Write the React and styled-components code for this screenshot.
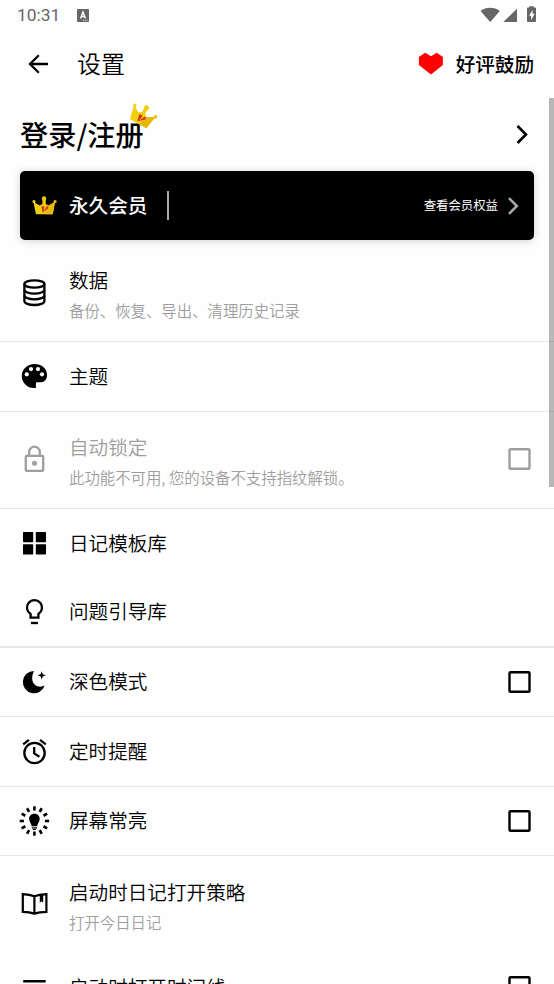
import styled, { createGlobalStyle } from "styled-components";

const GlobalStyle = createGlobalStyle`
  * {
    box-sizing: border-box;
  }
  body {
    margin: 0;
    background: #fefefe;
    color: #000;
    font-family: "Noto Sans CJK SC", sans-serif;
    font-weight: 350;
  }
`;

const Screen = styled.div`
  position: relative;
  display: flex;
  flex-direction: column;
  width: 554px;
  height: 984px;
  overflow: hidden;
`;

const StatusBar = styled.div`
  display: flex;
  align-items: center;
  flex: none;
  height: 30px;
  padding: 0 16px 0 17px;
  color: #666;
`;

const Clock = styled.span`
  width: 60px;
  font: 400 17.4px/30px Roboto, sans-serif;
`;

const StatusIcons = styled.div`
  display: flex;
  margin-left: auto;
`;

const Header = styled.header`
  display: flex;
  align-items: center;
  flex: none;
  height: 68px;
  padding: 0 20px 0 23px;
`;

const Title = styled.h1`
  margin: 0 auto 0 24px;
  padding-bottom: 3px;
  font-size: 24px;
  font-weight: 350;
  line-height: 36px;
`;

const Praise = styled.span`
  margin-left: 12px;
  padding-bottom: 1px;
  font-size: 19.6px;
  font-weight: 500;
  line-height: 30px;
`;

const Content = styled.main`
  flex: none;
`;

const Account = styled.div`
  display: flex;
  align-items: center;
  justify-content: space-between;
  height: 73px;
  padding: 0 20px 2px;
`;

const Login = styled.div`
  position: relative;
  font-size: 28.2px;
  font-weight: 500;
  line-height: 42px;
`;

const TiltedCrown = styled.div`
  position: absolute;
  top: -12px;
  left: 109px;
  display: flex;
  transform: rotate(29deg);
`;

const Member = styled.div`
  display: flex;
  align-items: center;
  height: 69px;
  margin: 0 20px 4px;
  padding: 0 13px 0 12px;
  border-radius: 5px;
  background: #000;
  box-shadow: 0 1px 8px rgba(0, 0, 0, 0.18);
  color: #fff;
`;

const MemberName = styled.span`
  margin-left: 12px;
  padding-bottom: 2px;
  font-size: 19.6px;
  font-weight: 500;
`;

const Separator = styled.span`
  width: 2px;
  height: 29px;
  margin-left: 20px;
  background: #aaa;
`;

const Benefits = styled.span`
  margin: 0 7px 0 auto;
  padding-bottom: 1px;
  font-size: 12.4px;
  font-weight: 400;
`;

const RowWrap = styled.div`
  display: flex;
  align-items: center;
  height: ${(p) => p.$height}px;
  padding: 0 22px 0 20px;
  border-bottom: ${(p) => p.$line}px solid #e6e6e6;
  color: ${(p) => (p.$disabled ? "#9e9e9e" : "#000")};
`;

const RowIcon = styled.svg`
  flex: none;
  align-self: flex-start;
  width: 30px;
  height: 30px;
  margin-top: ${(p) => (p.$tall ? 33 : 19)}px;
  overflow: visible;
`;

const RowText = styled.div`
  margin-left: 19px;
  padding: ${(p) => (p.$tall ? "2px 0 0" : "0 0 2px")};
`;

const RowTitle = styled.div`
  font-size: 19.6px;
  line-height: 30px;
`;

const RowNote = styled.div`
  margin-top: 2px;
  font-size: 15.4px;
  line-height: 26px;
  color: #9e9e9e;
`;

const Check = styled.svg`
  flex: none;
  align-self: flex-start;
  width: 24px;
  height: 24px;
  margin: ${(p) => (p.$tall ? 35 : 22)}px 0 0 auto;
`;

const Scrollbar = styled.div`
  position: absolute;
  top: 98px;
  right: 0;
  width: 5px;
  height: 389px;
  background: rgba(0, 0, 0, 0.28);
`;

function Crown({ width = 24 }) {
  return (
    <svg width={width} height={width} viewBox="0 0 24 24">
      <path d="M3.8 20.3 1.3 8.3 7.3 12 10 10.5V5h3.2v5.5l2.8 1.5 6.2-3.7-2.3 12.200H4.200z" fill="#f0d00e" />
      <path d="M16 12l6.200-3.700-2.300 12.200h-7z" fill="#e8b808" />
      <circle cx="1.9" cy="8.2" r="1.5" fill="#f0d20e" />
      <circle cx="11.6" cy="5.2" r="2.1" fill="#efca0c" />
      <circle cx="22.2" cy="8.2" r="1.5" fill="#e8c00a" />
      <path d="M9 12.700h3v3.700l2-3.700c2.500-.3 2.100 2-.1 3.400L10.200 19z" fill="#d8302c" />
      <path d="M12.600 12.600l-.8 4.300" stroke="#f0cf0c" strokeWidth=".7" />
    </svg>
  );
}

const rays = Array.from({ length: 12 }, (_, i) => i * 30);

const icons = {
  data: (
    <g fill="none" stroke="currentColor" strokeWidth="2.3">
      <ellipse cx="14.4" cy="7" rx="10" ry="3.7" />
      <path d="M4.4 7v17.2c0 2.1 4.5 3.8 10 3.8s10-1.7 10-3.8V7" />
      <path d="M4.4 12.8c0 2.1 4.5 3.8 10 3.8s10-1.7 10-3.8M4.4 18.5c0 2.1 4.5 3.8 10 3.8s10-1.7 10-3.8" />
    </g>
  ),
  theme: (
    <>
      <path
        d="M14.500 3C7.400 3 1.800 8.200 1.800 15c0 6.800 5.400 12.100 12.200 12.100h1.900v-4.600q0-1.300 1.300-1.300H21c3.600 0 6-2.700 6-7.200C27 7.500 21.500 3 14.500 3z"
        fill="currentColor"
      />
      <g fill="#fff">
        <circle cx="6.8" cy="13.3" r="2.1" />
        <circle cx="11" cy="8.1" r="2.1" />
        <circle cx="18" cy="8.1" r="2.1" />
        <circle cx="22" cy="13.3" r="2.1" />
      </g>
    </>
  ),
  lock: (
    <>
      <g fill="none" stroke="currentColor" strokeWidth="2.3">
        <rect x="5.8" y="10.8" width="17.4" height="15.1" rx="1" />
        <path d="M9.200 10.800V7a5.300 5.300 0 0 1 10.600 0v3.800" />
      </g>
      <circle cx="14.5" cy="18.2" r="2.5" fill="currentColor" />
    </>
  ),
  grid: (
    <g fill="currentColor">
      <rect x="3" y="4" width="10.2" height="10.2" rx=".6" />
      <rect x="15.8" y="4" width="10.2" height="10.2" rx=".6" />
      <rect x="3" y="16.2" width="10.2" height="10.2" rx=".6" />
      <rect x="15.8" y="16.2" width="10.2" height="10.2" rx=".6" />
    </g>
  ),
  bulb: (
    <g fill="none" stroke="currentColor" strokeWidth="2.3">
      <path d="M10.600 20.700v-3.600a7.500 7.500 0 1 1 7.800 0v3.600z" />
      <path d="M11 26h7" />
    </g>
  ),
  moon: (
    <g fill="currentColor">
      <path d="M13.900 3.900A11.200 11.200 0 1 0 24.700 18.600c-3.400 1.700-7.700 1.300-10.100-1.200-3.100-3.200-3-8.300-.7-13.500z" />
      <path d="M21.700 4.200l1.100 3 3 1.100-3 1.100-1.100 3-1.100-3-3-1.100 3-1.100z" />
    </g>
  ),
  alarm: (
    <g fill="none" stroke="currentColor" strokeWidth="2.3">
      <circle cx="14.5" cy="17" r="10.2" />
      <path d="M3.200 8.300l5.700-4.500M20 3.800l5.800 4.500M14.200 10.900v6.500l5.200 3.400" />
    </g>
  ),
  bright: (
    <>
      <g stroke="currentColor" strokeWidth="2.6">
        {rays.map((angle) => (
          <path key={angle} d="M14.400.3v4.200" transform={`rotate(${angle} 14.4 15)`} />
        ))}
      </g>
      <g fill="currentColor">
        <path d="M14.400 7.800c-3.100 0-5.300 2.200-5.300 5.100 0 3.100 2.500 4.200 2.500 7.400h5.600c0-3.200 2.500-4.300 2.500-7.400 0-2.900-2.200-5.100-5.300-5.100z" />
        <path d="M11.800 21.200h5.200v1.200h-5.200zM12.800 23h3.200v1h-3.200z" />
      </g>
    </>
  ),
  book: (
    <>
      <path
        d="M14.400 7.300C11 6 7 5.400 2.800 5.200v17.700c4.200 0 8.200.5 11.600 1.700 3.400-1.200 7.600-1.700 12-1.700V5.200C22 5.400 17.800 6 14.400 7.300zv17"
        fill="none"
        stroke="currentColor"
        strokeWidth="2.2"
      />
      <path d="M19.800 5.500h3.400v8.200l-1.700-1.500-1.700 1.500z" fill="currentColor" />
    </>
  ),
  timeline: <path d="M3.200 9.200h22.500M3.200 16h22.500M3.200 23h22.500" stroke="currentColor" strokeWidth="2.4" />,
};

const rows = [
  { icon: "data", title: "数据", note: "备份、恢复、导出、清理历史记录", height: 98, line: 1 },
  { icon: "theme", title: "主题", height: 70, line: 1 },
  {
    icon: "lock",
    title: "自动锁定",
    note: "此功能不可用, 您的设备不支持指纹解锁。",
    height: 97,
    line: 1,
    check: true,
    disabled: true,
  },
  { icon: "grid", title: "日记模板库", height: 69, line: 0 },
  { icon: "bulb", title: "问题引导库", height: 70, line: 2 },
  { icon: "moon", title: "深色模式", height: 69, line: 1, check: true },
  { icon: "alarm", title: "定时提醒", height: 70, line: 1 },
  { icon: "bright", title: "屏幕常亮", height: 69, line: 1, check: true },
  { icon: "book", title: "启动时日记打开策略", note: "打开今日日记", height: 97, line: 0 },
  { icon: "timeline", title: "启动时打开时间线", height: 69, line: 0, check: true },
];

function Row({ icon, title, note, height, line, check, disabled }) {
  return (
    <RowWrap $height={height} $line={line} $disabled={disabled}>
      <RowIcon viewBox="0 0 30 30" $tall={!!note}>
        {icons[icon]}
      </RowIcon>
      <RowText $tall={!!note}>
        <RowTitle>{title}</RowTitle>
        {note && <RowNote>{note}</RowNote>}
      </RowText>
      {check && (
        <Check viewBox="0 0 24 24" $tall={!!note}>
          <rect x="1.5" y="2.2" width="20" height="19.5" rx="1" fill="none" stroke="currentColor" strokeWidth="2.4" />
        </Check>
      )}
    </RowWrap>
  );
}

export default function App() {
  return (
    <>
      <GlobalStyle />
      <Screen>
        <StatusBar>
          <Clock>10:31</Clock>
          <svg width="12" height="13" viewBox="0 0 12 13">
            <rect width="12" height="13" rx="1" fill="#666" />
            <path d="M3.500 9.500 6 3l2.500 6.500M4.300 7.500h3.400" fill="none" stroke="#fff" strokeWidth="1.4" />
            <path d="M6 11.300h5" stroke="#fff" strokeWidth=".9" strokeDasharray="1 .8" />
          </svg>
          <StatusIcons>
            <svg width="58" height="18" viewBox="0 0 58 18" fill="#666">
              <path d="M.6 4.900C6 .6 14.500.6 19.800 4.900L10.200 16z" />
              <path d="M37 2.800V16H23.300z" />
              <path d="M49.300 1.500V.3h4.500v1.200h1.500q.7 0 .7.700v13q0 .8-.8.800h-7.400q-.8 0-.8-.8v-13q0-.7.700-.7z" />
              <path d="M52.600 4v3.800h2l-3.500 6.400v-4.500h-2z" fill="#fff" />
            </svg>
          </StatusIcons>
        </StatusBar>
        <Header>
          <svg width="30" height="30" viewBox="0 0 30 30" fill="none" stroke="#000" strokeWidth="2.3">
            <path d="M25 15H7M15.800 6.200 7 15l8.800 8.800" />
          </svg>
          <Title>设置</Title>
          <svg width="26" height="24" viewBox="0 0 26 24">
            <path d="M7.200.8 13 4.300 18.800.8 24.900 5v8L13 22.500.9 13V5z" fill="#f00" />
          </svg>
          <Praise>好评鼓励</Praise>
        </Header>
        <Content>
          <Account>
            <Login>
              登录/注册
              <TiltedCrown>
                <Crown width={28} />
              </TiltedCrown>
            </Login>
            <svg width="24" height="24" viewBox="0 0 24 24" fill="none" stroke="#000" strokeWidth="2.6">
              <path d="M7.500 4 16 12.500l-8.500 8.500" />
            </svg>
          </Account>
          <Member>
            <Crown width={25} />
            <MemberName>永久会员</MemberName>
            <Separator />
            <Benefits>查看会员权益</Benefits>
            <svg width="16" height="20" viewBox="0 0 16 20" fill="none" stroke="#aaa" strokeWidth="2.5">
              <path d="M4 2.200 11.800 10 4 17.800" />
            </svg>
          </Member>
          {rows.map((row) => (
            <Row key={row.title} {...row} />
          ))}
        </Content>
        <Scrollbar />
      </Screen>
    </>
  );
}
